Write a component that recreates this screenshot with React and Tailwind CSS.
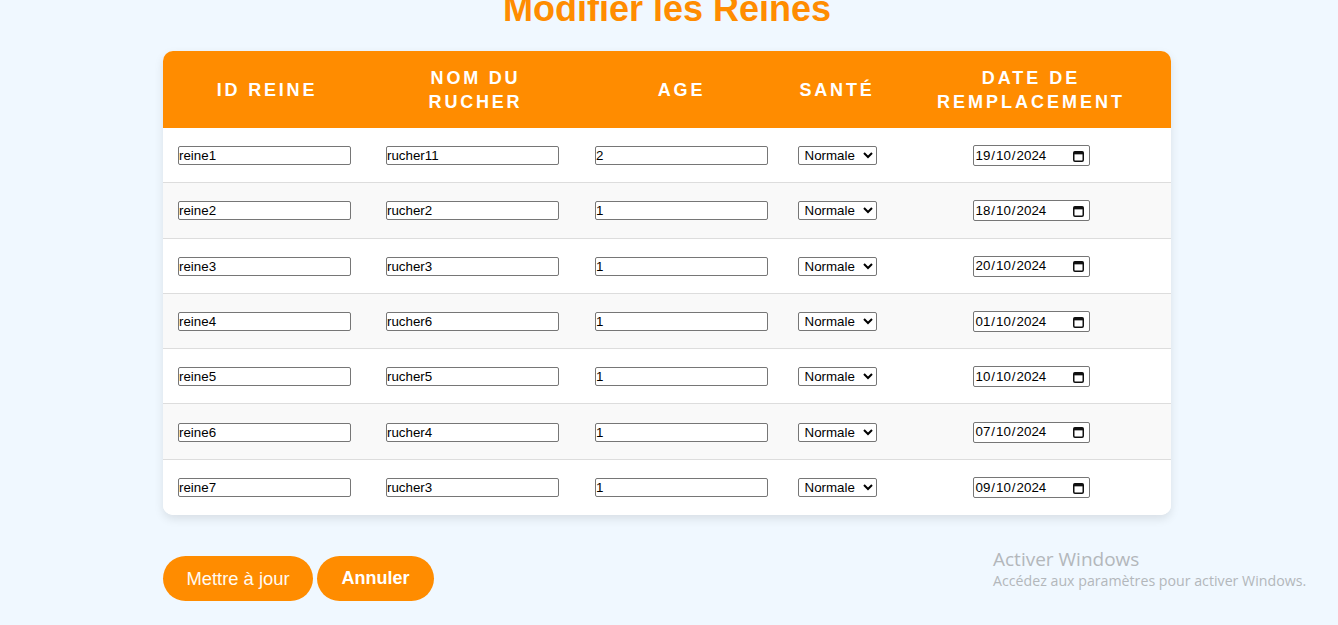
import React from "react";

const rows = [
  { id: "reine1", rucher: "rucher11", age: "2", date: "19/10/2024" },
  { id: "reine2", rucher: "rucher2", age: "1", date: "18/10/2024" },
  { id: "reine3", rucher: "rucher3", age: "1", date: "20/10/2024" },
  { id: "reine4", rucher: "rucher6", age: "1", date: "01/10/2024" },
  { id: "reine5", rucher: "rucher5", age: "1", date: "10/10/2024" },
  { id: "reine6", rucher: "rucher4", age: "1", date: "07/10/2024" },
  { id: "reine7", rucher: "rucher3", age: "1", date: "09/10/2024" },
];

const inputCls =
  "w-[173px] h-[19px] border border-[#767676] rounded-[2px] bg-white px-0 text-[13.33px] leading-[17px] text-black font-['Liberation_Sans',Arial,sans-serif] outline-none";

function DateField({ value }) {
  const parts = value.split("/");
  return (
    <div className="w-[117px] h-[21px] border border-[#767676] rounded-[2px] bg-white flex items-center pl-[2px] pr-[5px] text-[13.33px] text-black font-['Liberation_Sans',Arial,sans-serif]">
      <span className="flex-1 flex">
        <span>{parts[0]}</span>
        <span className="px-[1px]">/</span>
        <span>{parts[1]}</span>
        <span className="px-[1px]">/</span>
        <span>{parts[2]}</span>
      </span>
      <svg width="11" height="12" viewBox="0 0 11 12" className="shrink-0">
        <rect x="0.75" y="1.75" width="9.5" height="9.5" rx="1.2" fill="none" stroke="#111" strokeWidth="1.5" />
        <rect x="0.75" y="1.75" width="9.5" height="2.6" fill="#111" />
      </svg>
    </div>
  );
}

export default function App() {
  return (
    <div className="min-h-[625px] w-full bg-[#f0f8ff] font-['Liberation_Sans',Arial,sans-serif] overflow-hidden relative">
      <div className="ml-[163px] w-[1008px] flex flex-col">
        <h1 className="mt-[-11px] mb-[22px] text-center text-[36px] leading-[40px] font-bold text-[#ff8c00]">
          Modifier les Reines
        </h1>

        <div className="bg-white rounded-[10px] overflow-hidden shadow-[0_4px_10px_rgba(0,0,0,0.1)]">
          <div className="grid grid-cols-[208px_209px_203px_108px_280px] h-[77px] bg-[#ff8c00] text-white font-bold text-[18px] leading-[24px] tracking-[2.8px] uppercase">
            <div className="flex items-center justify-center text-center px-[15px]">ID REINE</div>
            <div className="flex items-center justify-center text-center px-[15px]">NOM DU<br />RUCHER</div>
            <div className="flex items-center justify-center text-center px-[15px]">AGE</div>
            <div className="flex items-center justify-center text-center">SANTÉ</div>
            <div className="flex items-center justify-center text-center px-[15px] tracking-[3px]">DATE DE<br />REMPLACEMENT</div>
          </div>

          {rows.map((r, i) => (
            <div
              key={r.id}
              className={`grid grid-cols-[208px_209px_203px_108px_280px] h-[55.3px] items-center ${
                i % 2 === 1 ? "bg-[#f9f9f9]" : "bg-white"
              } ${i < rows.length - 1 ? "border-b border-[#dddddd]" : ""}`}
            >
              <div className="pl-[15px] pt-[1px] flex">
                <input className={inputCls} defaultValue={r.id} />
              </div>
              <div className="pl-[15px] pt-[1px] flex">
                <input className={inputCls} defaultValue={r.rucher} />
              </div>
              <div className="pl-[15px] pt-[1px] flex">
                <input className={inputCls} defaultValue={r.age} />
              </div>
              <div className="flex justify-center pt-[1px]">
                <select
                  defaultValue="Normale"
                  className="w-[79px] h-[19px] border border-[#767676] rounded-[2px] bg-white text-[13.33px] text-black font-['Liberation_Sans',Arial,sans-serif] pl-[2px]"
                >
                  <option>Normale</option>
                  <option>Faible</option>
                  <option>Malade</option>
                </select>
              </div>
              <div className="flex justify-center pt-[1px]">
                <DateField value={r.date} />
              </div>
            </div>
          ))}
        </div>

        <div className="mt-[41px] flex gap-[4px]">
          <button className="h-[45px] w-[150px] rounded-full bg-[#ff8c00] text-[#fffaf2] text-[18.4px] font-normal">
            Mettre à jour
          </button>
          <button className="h-[45px] w-[117px] rounded-full bg-[#ff8c00] text-white text-[18px] font-bold">
            Annuler
          </button>
        </div>
      </div>

      <div className="absolute left-[993px] top-[546px] text-[#b3b7bb] font-['Open_Sans','Noto_Sans',sans-serif] pointer-events-none">
        <div className="text-[19px] leading-[26px]">Activer Windows</div>
        <div className="text-[14.2px] leading-[18px]">Accédez aux paramètres pour activer Windows.</div>
      </div>
    </div>
  );
}
